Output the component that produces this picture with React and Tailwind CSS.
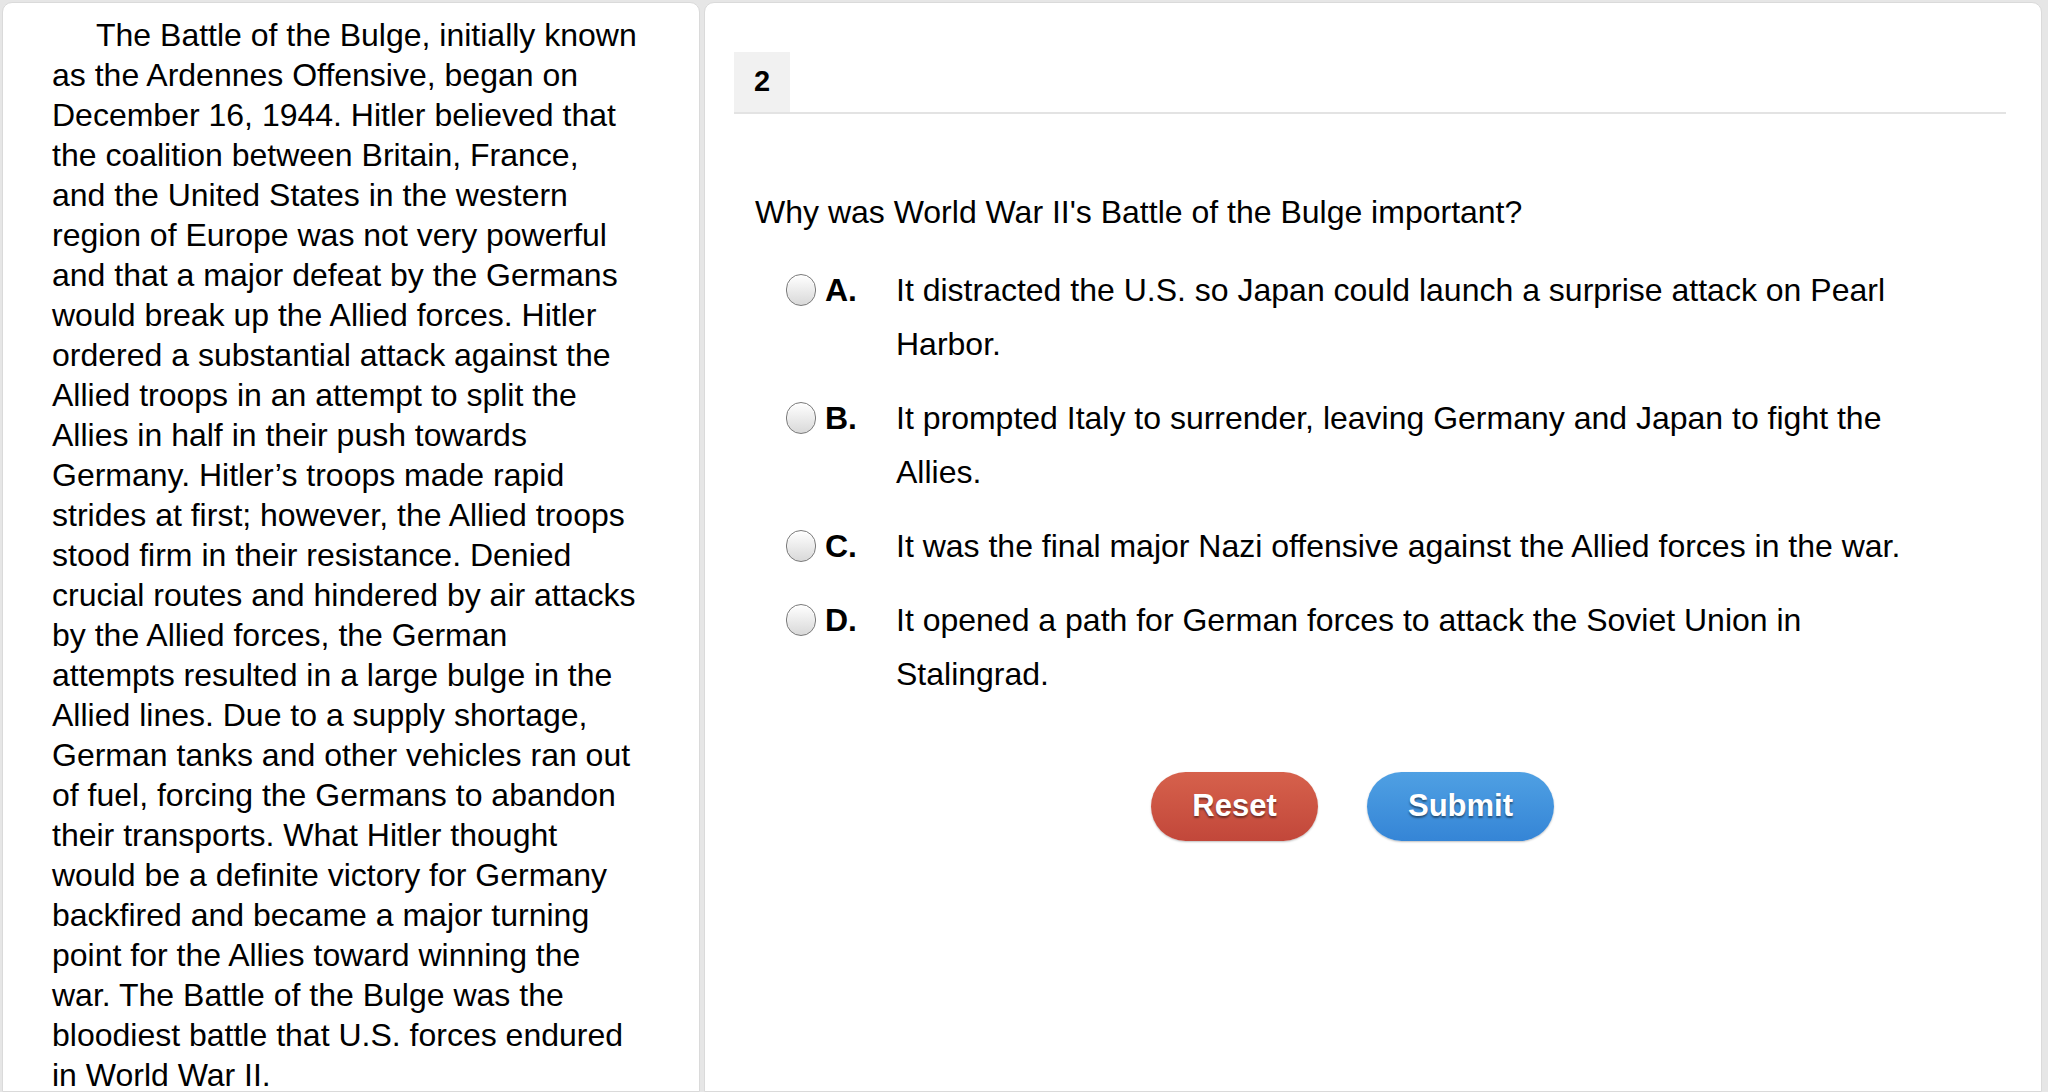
import React, { useState } from 'react';

const passage =
    'The Battle of the Bulge, initially known as the Ardennes Offensive, began on December 16, 1944. Hitler believed that the coalition between Britain, France, and the United States in the western region of Europe was not very powerful and that a major defeat by the Germans would break up the Allied forces. Hitler ordered a substantial attack against the Allied troops in an attempt to split the Allies in half in their push towards Germany. Hitler’s troops made rapid strides at first; however, the Allied troops stood firm in their resistance. Denied crucial routes and hindered by air attacks by the Allied forces, the German attempts resulted in a large bulge in the Allied lines. Due to a supply shortage, German tanks and other vehicles ran out of fuel, forcing the Germans to abandon their transports. What Hitler thought would be a definite victory for Germany backfired and became a major turning point for the Allies toward winning the war. The Battle of the Bulge was the bloodiest battle that U.S. forces endured in World War II.';

const choices = [
    { key: 'A', text: 'It distracted the U.S. so Japan could launch a surprise attack on Pearl Harbor.' },
    { key: 'B', text: 'It prompted Italy to surrender, leaving Germany and Japan to fight the Allies.' },
    { key: 'C', text: 'It was the final major Nazi offensive against the Allied forces in the war.' },
    { key: 'D', text: 'It opened a path for German forces to attack the Soviet Union in Stalingrad.' },
];

const Radio = ({ checked }) => (
    <span className="flex h-[54px] w-[31px] shrink-0 items-center justify-center">
        <span className="flex h-[32px] w-[30px] items-center justify-center rounded-full border border-[#7a7a7a] bg-linear-to-b from-white to-[#d9d9d9] shadow-[inset_0_1px_1px_rgba(255,255,255,0.9)]">
            {checked && <span className="h-[12px] w-[12px] rounded-full bg-[#333]" />}
        </span>
    </span>
);

const App = () => {
    const [picked, setPicked] = useState(null);

    return (
        <div className="flex h-[1092px] w-[2048px] gap-[4px] overflow-hidden bg-[#e6e6e6] pl-[2px] pt-[2px] font-['Liberation_Sans',Arial,sans-serif] text-black">
            {/* reading passage */}
            <section className="w-[698px] shrink-0 rounded-t-[10px] border border-[#dadada] bg-white pl-[49px] pr-[62px] pt-[12px]">
                <p className="indent-[44px] text-[32px] leading-[40px]">{passage}</p>
            </section>

            {/* question */}
            <section className="w-[1338px] shrink-0 rounded-t-[10px] border border-[#dadada] bg-white pl-[29px] pr-[35px] pt-[49px]">
                <div className="flex border-b-2 border-[#e3e3e3]">
                    <div className="flex h-[60px] items-center bg-[#f1f1f1] px-[20px] text-[29px] font-bold">2</div>
                </div>

                <p className="mt-[71px] pl-[21px] text-[32px] leading-[54px]">
                    Why was World War II's Battle of the Bulge important?
                </p>

                <ul className="mt-[24px] flex w-[1206px] flex-col gap-[20px] pl-[51px]">
                    {choices.map((c) => (
                        <li
                            key={c.key}
                            onClick={() => setPicked(c.key)}
                            className="flex cursor-pointer items-start text-[32px] leading-[54px]"
                        >
                            <Radio checked={picked === c.key} />
                            <span className="w-[80px] shrink-0 pl-[9px] font-bold">{c.key}.</span>
                            <span className="flex-1">{c.text}</span>
                        </li>
                    ))}
                </ul>

                <div className="mt-[71px] flex justify-center gap-[49px] pr-[35px]">
                    <button
                        onClick={() => setPicked(null)}
                        className="h-[69px] w-[167px] rounded-full bg-linear-to-b from-[#d6614c] to-[#c2473a] text-[31px] font-bold text-white shadow-[0_1px_2px_rgba(0,0,0,0.25)] [text-shadow:0_2px_2px_rgba(0,0,0,0.45)]"
                    >
                        Reset
                    </button>
                    <button className="h-[69px] w-[187px] rounded-full bg-linear-to-b from-[#4fa0e3] to-[#3585d6] text-[31px] font-bold text-white shadow-[0_1px_2px_rgba(0,0,0,0.25)] [text-shadow:0_2px_2px_rgba(0,0,0,0.45)]">
                        Submit
                    </button>
                </div>
            </section>
        </div>
    );
};

export default App;
